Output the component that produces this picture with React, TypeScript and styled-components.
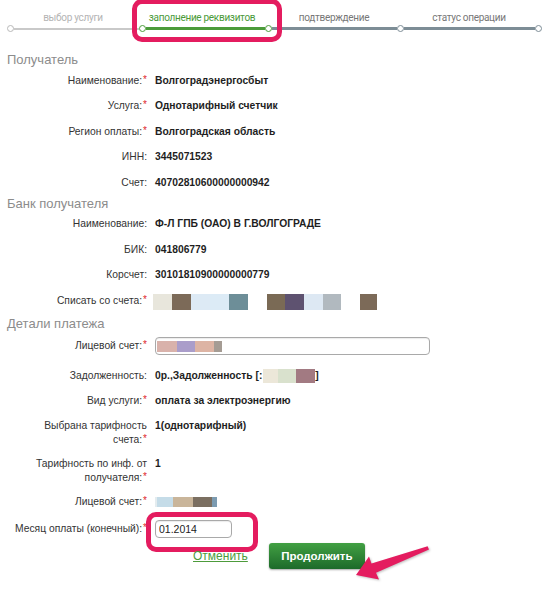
import React from 'react';
import styled, { createGlobalStyle } from 'styled-components';

const GlobalStyle = createGlobalStyle`
  html, body {
    margin: 0;
    padding: 0;
    background: #fff;
  }
  body {
    font-family: 'Liberation Sans', Arial, sans-serif;
  }
`;

const PINK = '#e41c5f';

const Page = styled.div`
  width: 542px;
  height: 600px;
  overflow: hidden;
  background: #fff;
`;

/* ---------- steps ---------- */

const Steps = styled.div`
  position: relative;
  margin-bottom: 20px;
`;

const StepLabels = styled.div`
  display: grid;
  grid-template-columns: 126px 132px 132px 138px;
  padding: 11px 0 0 10px;
  font-family: Roboto, 'Liberation Sans', sans-serif;
  font-size: 10px;
  letter-spacing: -0.3px;
  line-height: 14px;
  text-align: center;
`;

const StepLabel = styled.div<{ $tone: string }>`
  color: ${p => p.$tone};
  white-space: nowrap;
`;

const Track = styled.div`
  display: flex;
  align-items: center;
  height: 7px;
  padding-left: 6.5px;
`;

const Dot = styled.span<{ $tone: string }>`
  flex: 0 0 auto;
  position: relative;
  z-index: 1;
  width: 7px;
  height: 7px;
  box-sizing: border-box;
  border: 1.5px solid ${p => p.$tone};
  border-radius: 50%;
  background: #fff;
`;

const Segment = styled.span<{ $tone: string; $w: number; $h: number }>`
  flex: 0 0 ${p => p.$w}px;
  height: ${p => p.$h}px;
  background: ${p => p.$tone};
`;

const Callout = styled.div`
  position: absolute;
  box-sizing: border-box;
  border: 5px solid ${PINK};
  border-radius: 10px;
  pointer-events: none;
`;

const StepCallout = styled(Callout)`
  left: 132px;
  top: -1px;
  width: 150px;
  height: 43px;
`;

/* ---------- form ---------- */

const Form = styled.div`
  padding-left: 7px;
`;

const SectionTitle = styled.div`
  font-size: 13px;
  line-height: 16px;
  color: #8c8c8c;
`;

type RowKind = 'text' | 'input' | 'multi';

const pads: Record<RowKind, string> = {
  text: '5.75px 0',
  input: '5.5px 0 8px',
  multi: '5px 0 4.5px',
};

const Row = styled.div<{ $kind: RowKind }>`
  display: grid;
  grid-template-columns: 140px 1fr;
  column-gap: 8px;
  align-items: ${p => (p.$kind === 'input' ? 'center' : 'start')};
  padding: ${p => pads[p.$kind]};
  font-size: 10.3px;
  line-height: 14px;
`;

const Label = styled.div`
  text-align: right;
  color: #333;
`;

const LabelLine = styled.span`
  display: block;
`;

const Req = styled.span`
  position: relative;
  top: -1px;
  margin-left: 1px;
  color: #e0262b;
  font-size: 10px;
`;

const Value = styled.div`
  display: flex;
  align-items: center;
  min-height: 14px;
  font-weight: bold;
  color: #1e1e1e;
  white-space: nowrap;
`;

const Smudge = styled.span`
  display: inline-flex;
  align-items: center;
  filter: blur(0.4px);
`;

const Patch = styled.span<{ $c: string; $w: number; $h: number; $gap: number }>`
  display: inline-block;
  width: ${p => p.$w}px;
  height: ${p => p.$h}px;
  margin-left: ${p => p.$gap}px;
  background: ${p => p.$c};
`;

const Field = styled.div`
  display: flex;
  align-items: center;
  width: 275px;
  height: 18px;
  box-sizing: border-box;
  padding: 0 1px;
  border: 1px solid #a9a9a9;
  border-radius: 4px;
  background: #fff;
  box-shadow: inset 0 1px 1px rgba(0, 0, 0, 0.08);
`;

const MonthWrap = styled.div`
  position: relative;
  display: inline-block;
`;

const MonthInput = styled.input`
  display: block;
  width: 77px;
  height: 18px;
  box-sizing: border-box;
  padding: 0 3px;
  border: 1px solid #a9a9a9;
  border-radius: 4px;
  font-family: 'Liberation Sans', Arial, sans-serif;
  font-size: 10.5px;
  color: #222;
  box-shadow: inset 0 1px 1px rgba(0, 0, 0, 0.08);
  outline: none;
`;

const MonthCallout = styled(Callout)`
  left: -9px;
  top: -8px;
  width: 112px;
  height: 40px;
`;

/* ---------- actions ---------- */

const Actions = styled.div`
  position: relative;
  display: flex;
  align-items: center;
  gap: 21px;
  margin-top: -3px;
  padding-left: 193px;
`;

const CancelLink = styled.a`
  color: #4d9b3b;
  font-size: 12px;
  text-decoration: underline;
  cursor: pointer;
`;

const Continue = styled.button`
  width: 96px;
  height: 26px;
  border: 0;
  border-radius: 3px;
  background: linear-gradient(#42a043, #1d6a2a);
  color: #fff;
  font-family: 'Liberation Sans', Arial, sans-serif;
  font-size: 11.5px;
  font-weight: bold;
  box-shadow: 0 1px 2px rgba(0, 0, 0, 0.35);
  cursor: pointer;
`;

const Pointer = styled.svg`
  position: absolute;
  left: 349px;
  top: -9px;
  width: 85px;
  height: 48px;
  overflow: visible;
  filter: drop-shadow(1px 1px 1px rgba(0, 0, 0, 0.25));
`;

type PatchSpec = [string, number, number?];

const Blur = ({ patches, h }: { patches: PatchSpec[]; h: number }) => (
  <Smudge>
    {patches.map(([c, w, gap], i) => (
      <Patch key={i} $c={c} $w={w} $h={h} $gap={gap ?? 0} />
    ))}
  </Smudge>
);

const steps = [
  { label: 'выбор услуги', tone: '#b4b4b4' },
  { label: 'заполнение реквизитов', tone: '#4a9a38' },
  { label: 'подтверждение', tone: '#777' },
  { label: 'статус операции', tone: '#777' },
];

const segments = [
  { w: 125, tone: '#c9c9c9', h: 2, dot: '#b9b9b9' },
  { w: 119, tone: '#4b9b3a', h: 3, dot: '#4b9b3a' },
  { w: 125, tone: '#7d8d96', h: 3, dot: '#4b9b3a' },
  { w: 131, tone: '#7d8d96', h: 3, dot: '#7d8d96' },
];

type Line = { label: string[]; req?: boolean; value?: React.ReactNode; kind?: RowKind };

const recipient: Line[] = [
  { label: ['Наименование:'], req: true, value: 'Волгоградэнергосбыт' },
  { label: ['Услуга:'], req: true, value: 'Однотарифный счетчик' },
  { label: ['Регион оплаты:'], req: true, value: 'Волгоградская область' },
  { label: ['ИНН:'], value: '3445071523' },
  { label: ['Счет:'], value: '40702810600000000942' },
];

const bank: Line[] = [
  { label: ['Наименование:'], value: 'Ф-Л ГПБ (ОАО) В Г.ВОЛГОГРАДЕ' },
  { label: ['БИК:'], value: '041806779' },
  { label: ['Корсчет:'], value: '30101810900000000779' },
  {
    label: ['Списать со счета:'],
    req: true,
    value: (
      <Blur
        h={16}
        patches={[
          ['#e8e6dc', 19, -2],
          ['#7c6a58', 19],
          ['#ddeaf5', 19],
          ['#dcebf6', 19],
          ['#6d8e98', 19],
          ['#7a6a55', 18, 19],
          ['#5e5270', 19],
          ['#dde8f3', 19],
          ['#b1b9bf', 18],
          ['#7c6a58', 17, 19],
        ]}
      />
    ),
  },
];

const details: Line[] = [
  {
    label: ['Лицевой счет:'],
    req: true,
    kind: 'input',
    value: (
      <Field>
        <Blur
          h={11}
          patches={[
            ['#d9b2ab', 20],
            ['#aa9dca', 18],
            ['#ddb4a4', 19],
            ['#a59c94', 8],
          ]}
        />
      </Field>
    ),
  },
  {
    label: ['Задолженность:'],
    value: (
      <>
        0р.,Задолженность [:
        <Blur
          h={14}
          patches={[
            ['#ece7d9', 15, 1],
            ['#d9e1cd', 18],
            ['#a27a82', 19],
          ]}
        />
        ]
      </>
    ),
  },
  { label: ['Вид услуги:'], req: true, value: 'оплата за электроэнергию' },
  { label: ['Выбрана тарифность', 'счета:'], req: true, kind: 'multi', value: '1(однотарифный)' },
  { label: ['Тарифность по инф. от', 'получателя:'], req: true, kind: 'multi', value: '1' },
  {
    label: ['Лицевой счет:'],
    req: true,
    value: (
      <Blur
        h={10}
        patches={[
          ['#e4ecef', 2],
          ['#c5dce8', 16],
          ['#c9b59a', 20],
          ['#7b6f61', 19],
          ['#7c9bb1', 5],
        ]}
      />
    ),
  },
  {
    label: ['Месяц оплаты (конечный):'],
    req: true,
    kind: 'input',
    value: (
      <MonthWrap>
        <MonthInput defaultValue="01.2014" />
        <MonthCallout />
      </MonthWrap>
    ),
  },
];

const Rows = ({ lines }: { lines: Line[] }) => (
  <>
    {lines.map((l, i) => (
      <Row key={i} $kind={l.kind ?? 'text'}>
        <Label>
          {l.label.map((text, j) => (
            <LabelLine key={j}>
              {text}
              {l.req && j === l.label.length - 1 && <Req>*</Req>}
            </LabelLine>
          ))}
        </Label>
        <Value>{l.value}</Value>
      </Row>
    ))}
  </>
);

export default function App() {
  return (
    <Page>
      <GlobalStyle />
      <Steps>
        <StepLabels>
          {steps.map(s => (
            <StepLabel key={s.label} $tone={s.tone}>
              {s.label}
            </StepLabel>
          ))}
        </StepLabels>
        <Track>
          {segments.map((s, i) => (
            <React.Fragment key={i}>
              <Dot $tone={s.dot} />
              <Segment $tone={s.tone} $w={s.w} $h={s.h} />
            </React.Fragment>
          ))}
          <Dot $tone="#7d8d96" />
        </Track>
        <StepCallout />
      </Steps>

      <Form>
        <SectionTitle>Получатель</SectionTitle>
        <Rows lines={recipient} />
        <SectionTitle>Банк получателя</SectionTitle>
        <Rows lines={bank} />
        <SectionTitle>Детали платежа</SectionTitle>
        <Rows lines={details} />
      </Form>

      <Actions>
        <CancelLink>Отменить</CancelLink>
        <Continue type="button">Продолжить</Continue>
        <Pointer viewBox="0 0 85 48">
          <polygon
            points="7,41 30,45.5 27,38.8 80,15.5 78.6,12.2 22.5,29.6 20,22.5"
            fill={PINK}
          />
        </Pointer>
      </Actions>
    </Page>
  );
}
